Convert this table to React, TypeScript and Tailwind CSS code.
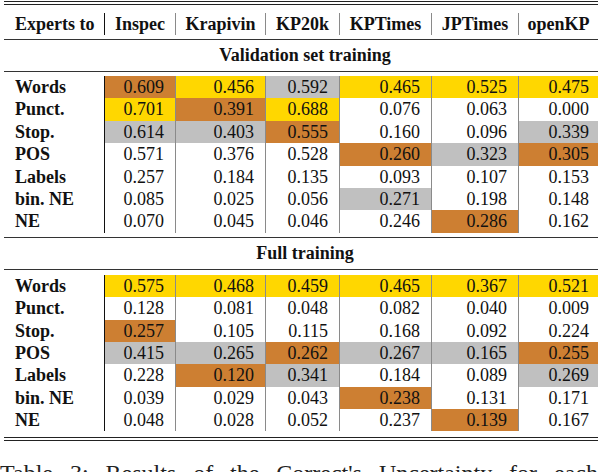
import React from 'react';

type Cell = [string, string];

const fill: Record<string, string> = {
  g: 'bg-[#ffd700]',
  s: 'bg-[#c0c0c0]',
  b: 'bg-[#cd7f32]',
  w: '',
};

const colLines = [
  'border-l border-[#111]',
  'border-l border-[#8a8a8a]',
  'border-l border-[#8a8a8a]',
  'border-l border-[#8a8a8a]',
  'border-l border-[#8a8a8a]',
  'border-l border-[#8a8a8a]',
];

const headers = ['Inspec', 'Krapivin', 'KP20k', 'KPTimes', 'JPTimes', 'openKP'];

const validation: [string, Cell[]][] = [
  ['Words', [['0.609', 'b'], ['0.456', 'g'], ['0.592', 's'], ['0.465', 'g'], ['0.525', 'g'], ['0.475', 'g']]],
  ['Punct.', [['0.701', 'g'], ['0.391', 'b'], ['0.688', 'g'], ['0.076', 'w'], ['0.063', 'w'], ['0.000', 'w']]],
  ['Stop.', [['0.614', 's'], ['0.403', 's'], ['0.555', 'b'], ['0.160', 'w'], ['0.096', 'w'], ['0.339', 's']]],
  ['POS', [['0.571', 'w'], ['0.376', 'w'], ['0.528', 'w'], ['0.260', 'b'], ['0.323', 's'], ['0.305', 'b']]],
  ['Labels', [['0.257', 'w'], ['0.184', 'w'], ['0.135', 'w'], ['0.093', 'w'], ['0.107', 'w'], ['0.153', 'w']]],
  ['bin. NE', [['0.085', 'w'], ['0.025', 'w'], ['0.056', 'w'], ['0.271', 's'], ['0.198', 'w'], ['0.148', 'w']]],
  ['NE', [['0.070', 'w'], ['0.045', 'w'], ['0.046', 'w'], ['0.246', 'w'], ['0.286', 'b'], ['0.162', 'w']]],
];

const full: [string, Cell[]][] = [
  ['Words', [['0.575', 'g'], ['0.468', 'g'], ['0.459', 'g'], ['0.465', 'g'], ['0.367', 'g'], ['0.521', 'g']]],
  ['Punct.', [['0.128', 'w'], ['0.081', 'w'], ['0.048', 'w'], ['0.082', 'w'], ['0.040', 'w'], ['0.009', 'w']]],
  ['Stop.', [['0.257', 'b'], ['0.105', 'w'], ['0.115', 'w'], ['0.168', 'w'], ['0.092', 'w'], ['0.224', 'w']]],
  ['POS', [['0.415', 's'], ['0.265', 's'], ['0.262', 'b'], ['0.267', 's'], ['0.165', 's'], ['0.255', 'b']]],
  ['Labels', [['0.228', 'w'], ['0.120', 'b'], ['0.341', 's'], ['0.184', 'w'], ['0.089', 'w'], ['0.269', 's']]],
  ['bin. NE', [['0.039', 'w'], ['0.029', 'w'], ['0.043', 'w'], ['0.238', 'b'], ['0.131', 'w'], ['0.171', 'w']]],
  ['NE', [['0.048', 'w'], ['0.028', 'w'], ['0.052', 'w'], ['0.237', 'w'], ['0.139', 'b'], ['0.167', 'w']]],
];

const grid = 'grid grid-cols-[100px_71px_90px_74px_92px_87px_80px]';

const Rows = ({ rows }: { rows: [string, Cell[]][] }) => (
  <>
    {rows.map(([label, cells]) => (
      <div key={label} className={`${grid} h-[22.4px] leading-[22.4px]`}>
        <div className="pl-[11px] font-bold">{label}</div>
        {cells.map(([v, c], i) => (
          <div key={i} className={`${colLines[i]} ${fill[c]} text-right ${i === 5 ? 'pr-[9px]' : 'pr-[11px]'}`}>
            {v}
          </div>
        ))}
      </div>
    ))}
  </>
);

export default function App() {
  return (
    <div className="w-[602px] h-[472px] overflow-hidden bg-white text-[#111] text-[18px] font-['Liberation_Serif',serif]">
      <div className="ml-[4px] w-[594px] pt-[1px]">
        <div className="h-[4px] border-t border-b border-[#222]" />
        <div className={`${grid} pt-[8px] pb-[4px] font-bold`}>
          <div className="h-[22px] leading-[22px] pl-[11px]">Experts to</div>
          {headers.map((h, i) => (
            <div key={h} className={`h-[22px] leading-[22px] text-center ${colLines[i]}`}>
              {h}
            </div>
          ))}
        </div>
        <div className="h-px bg-[#333]" />
        <div className="h-[31px] flex items-center justify-center pl-[8px] font-bold">Validation set training</div>
        <div className="h-px bg-[#333]" />
        <div className="pt-[4px] pb-[4px]">
          <Rows rows={validation} />
        </div>
        <div className="h-px bg-[#333]" />
        <div className="h-[31px] flex items-center justify-center pl-[8px] font-bold">Full training</div>
        <div className="h-px bg-[#333]" />
        <div className="pt-[5px] pb-[6px]">
          <Rows rows={full} />
        </div>
        <div className="h-[4px] border-t border-b border-[#222]" />
      </div>
      <div className="mt-[20px] w-[598px] text-justify [text-align-last:justify] text-[24px] leading-[24px] text-[#222]">
        Table 3: Results of the Correct&apos;s Uncertainty for each
      </div>
    </div>
  );
}
